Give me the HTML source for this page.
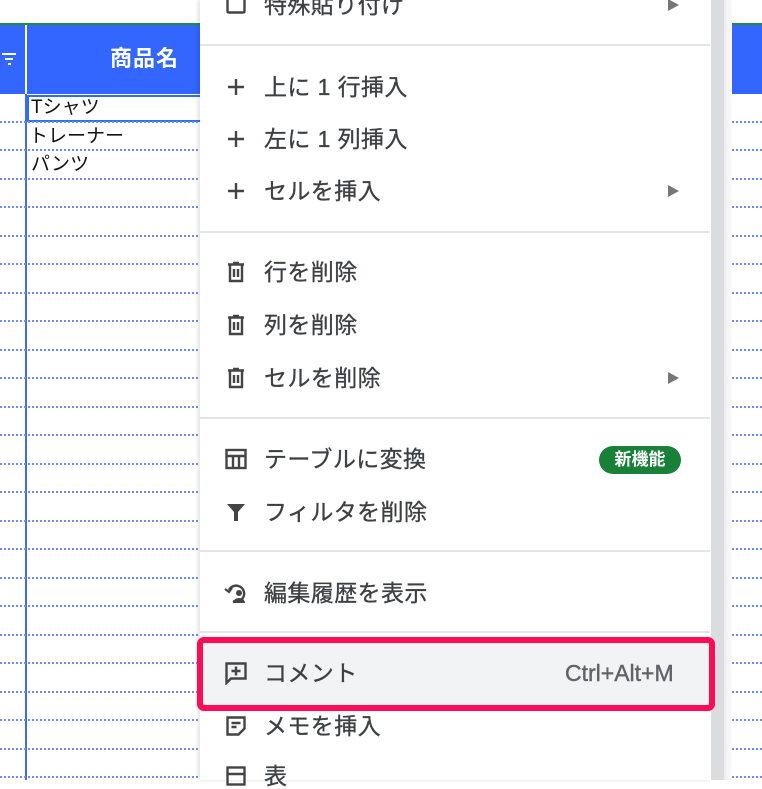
<!DOCTYPE html>
<html><head><meta charset="utf-8"><style>
*{margin:0;padding:0;box-sizing:border-box}
body{width:762px;height:780px;overflow:hidden;background:#fff;position:relative;font-family:"Liberation Sans","Noto Sans CJK JP",sans-serif}
.a{position:absolute}
.hl{position:absolute;left:0;height:2px;background:repeating-linear-gradient(90deg,#6d8df5 0 2px,transparent 2px 4px)}
.t{position:absolute;left:264px;font-size:23px;letter-spacing:0.4px;color:#3c4043;line-height:24px;white-space:nowrap;-webkit-text-stroke:0.3px #3c4043}
.ic{position:absolute;left:224px;width:24px;height:24px}
.arr{position:absolute;left:668px;width:0;height:0;border-left:11px solid #777;border-top:6px solid transparent;border-bottom:6px solid transparent}
.div{position:absolute;left:200px;width:510px;height:2px;background:#e3e5e8}
</style></head><body>
<div class="a" style="left:0;top:23px;width:200px;height:2px;background:#1e8e3e"></div>
<div class="a" style="left:0;top:25px;width:200px;height:69px;background:#3366ff"></div>
<div class="a" style="left:25px;top:25px;width:2px;height:69px;background:#fff"></div>
<div class="a" style="left:25px;top:94px;width:2px;height:686px;background:#3a6df0"></div>
<div class="a" style="left:2px;top:53px;width:14px;height:2px;background:#fff"></div>
<div class="a" style="left:5px;top:58px;width:8px;height:2px;background:#fff"></div>
<div class="a" style="left:8px;top:63px;width:3px;height:2px;background:#fff"></div>
<div class="a" style="left:110px;top:46px;font-size:22px;letter-spacing:1px;font-weight:bold;color:#fff;line-height:26px">商品名</div>
<div class="a" style="left:27px;top:95px;width:175px;height:27px;border:2px solid #2a6ef5;border-right:none"></div>
<div class="a" style="left:31px;top:97px;font-size:19px;color:#111;line-height:22px">Tシャツ</div>
<div class="a" style="left:29px;top:126px;font-size:19px;color:#111;line-height:22px">トレーナー</div>
<div class="a" style="left:31px;top:154px;font-size:19px;color:#111;line-height:22px">パンツ</div>
<div class="a" style="left:0;top:0;width:200px;height:780px">
<div class="hl" style="top:121px;width:200px"></div><div class="hl" style="top:149px;width:200px"></div><div class="hl" style="top:178px;width:200px"></div><div class="hl" style="top:206px;width:200px"></div><div class="hl" style="top:235px;width:200px"></div><div class="hl" style="top:263px;width:200px"></div><div class="hl" style="top:292px;width:200px"></div><div class="hl" style="top:320px;width:200px"></div><div class="hl" style="top:349px;width:200px"></div><div class="hl" style="top:377px;width:200px"></div><div class="hl" style="top:406px;width:200px"></div><div class="hl" style="top:434px;width:200px"></div><div class="hl" style="top:463px;width:200px"></div><div class="hl" style="top:491px;width:200px"></div><div class="hl" style="top:520px;width:200px"></div><div class="hl" style="top:548px;width:200px"></div><div class="hl" style="top:577px;width:200px"></div><div class="hl" style="top:605px;width:200px"></div><div class="hl" style="top:634px;width:200px"></div><div class="hl" style="top:662px;width:200px"></div><div class="hl" style="top:691px;width:200px"></div><div class="hl" style="top:719px;width:200px"></div><div class="hl" style="top:748px;width:200px"></div><div class="hl" style="top:776px;width:200px"></div>
</div>
<div class="a" style="left:732px;top:23px;width:30px;height:2px;background:#1e8e3e"></div>
<div class="a" style="left:732px;top:25px;width:30px;height:69px;background:#3366ff"></div>
<div class="a" style="left:732px;top:0;width:30px;height:780px">
<div class="hl" style="top:121px;width:30px"></div><div class="hl" style="top:149px;width:30px"></div><div class="hl" style="top:178px;width:30px"></div><div class="hl" style="top:206px;width:30px"></div><div class="hl" style="top:235px;width:30px"></div><div class="hl" style="top:263px;width:30px"></div><div class="hl" style="top:292px;width:30px"></div><div class="hl" style="top:320px;width:30px"></div><div class="hl" style="top:349px;width:30px"></div><div class="hl" style="top:377px;width:30px"></div><div class="hl" style="top:406px;width:30px"></div><div class="hl" style="top:434px;width:30px"></div><div class="hl" style="top:463px;width:30px"></div><div class="hl" style="top:491px;width:30px"></div><div class="hl" style="top:520px;width:30px"></div><div class="hl" style="top:548px;width:30px"></div><div class="hl" style="top:577px;width:30px"></div><div class="hl" style="top:605px;width:30px"></div><div class="hl" style="top:634px;width:30px"></div><div class="hl" style="top:662px;width:30px"></div><div class="hl" style="top:691px;width:30px"></div><div class="hl" style="top:719px;width:30px"></div><div class="hl" style="top:748px;width:30px"></div><div class="hl" style="top:776px;width:30px"></div>
</div>
<div class="a" style="left:200px;top:0;width:511px;height:780px;background:#fff;box-shadow:-2px 0 4px rgba(0,0,0,.12)"></div>
<div class="a" style="left:711px;top:0;width:13px;height:780px;background:#dadce0"></div>
<div class="a" style="left:724px;top:0;width:8px;height:780px;background:linear-gradient(90deg,#eee,#fafafa)"></div>

<svg class="ic" style="top:-8px" viewBox="0 0 24 24"><rect x="3.5" y="3.5" width="17" height="17" rx="1" fill="none" stroke="#444" stroke-width="2.4"/></svg>
<div class="t" style="top:-7px">特殊貼り付け</div>
<div class="arr" style="top:-1px"></div>
<div class="div" style="top:44px"></div>

<svg class="ic" style="top:75px" viewBox="0 0 24 24"><path d="M12 4v16M4 12h16" stroke="#444" stroke-width="2.4"/></svg>
<div class="t" style="top:75px">上に 1 行挿入</div>
<svg class="ic" style="top:127px" viewBox="0 0 24 24"><path d="M12 4v16M4 12h16" stroke="#444" stroke-width="2.4"/></svg>
<div class="t" style="top:127px">左に 1 列挿入</div>
<svg class="ic" style="top:179px" viewBox="0 0 24 24"><path d="M12 4v16M4 12h16" stroke="#444" stroke-width="2.4"/></svg>
<div class="t" style="top:179px">セルを挿入</div>
<div class="arr" style="top:185px"></div>
<div class="div" style="top:231px"></div>

<svg class="ic" style="top:260px" viewBox="0 0 24 24"><path d="M4 4.5h16M9 3h6M6 5v16h12V5M10 9v8M14 9v8" fill="none" stroke="#444" stroke-width="2.4"/></svg>
<div class="t" style="top:260px">行を削除</div>
<svg class="ic" style="top:313px" viewBox="0 0 24 24"><path d="M4 4.5h16M9 3h6M6 5v16h12V5M10 9v8M14 9v8" fill="none" stroke="#444" stroke-width="2.4"/></svg>
<div class="t" style="top:313px">列を削除</div>
<svg class="ic" style="top:366px" viewBox="0 0 24 24"><path d="M4 4.5h16M9 3h6M6 5v16h12V5M10 9v8M14 9v8" fill="none" stroke="#444" stroke-width="2.4"/></svg>
<div class="t" style="top:366px">セルを削除</div>
<div class="arr" style="top:372px"></div>
<div class="div" style="top:417px"></div>

<svg class="ic" style="top:447px" viewBox="0 0 24 24"><rect x="2.5" y="3" width="19" height="18" fill="none" stroke="#444" stroke-width="2.4"/><path d="M2.5 9h19M9 9v12M15 9v12" stroke="#444" stroke-width="2.4"/></svg>
<div class="t" style="top:447px">テーブルに変換</div>
<div class="a" style="left:599px;top:446px;width:82px;height:28px;border-radius:14px;background:#188038;color:#fff;font-size:17px;font-weight:bold;line-height:28px;text-align:center">新機能</div>
<svg class="ic" style="top:500px" viewBox="0 0 24 24"><path d="M3 4h18l-7 8v9h-4v-9z" fill="#444"/></svg>
<div class="t" style="top:500px">フィルタを削除</div>
<div class="div" style="top:550px"></div>

<svg class="ic" style="top:581px" viewBox="0 0 24 24"><path d="M5 9a8 8 0 1 1 4 11" fill="none" stroke="#444" stroke-width="2.4"/><path d="M1 8l4 3 3-4" fill="none" stroke="#444" stroke-width="2.2"/><circle cx="15" cy="12" r="3" fill="#444"/><path d="M9 22c0-3 3-5 6-5s6 2 6 5z" fill="#444"/></svg>
<div class="t" style="top:581px">編集履歴を表示</div>
<div class="div" style="top:631px"></div>

<div class="a" style="left:197px;top:637px;width:518px;height:74px;border:6px solid #ff0a54;border-radius:7px;background:#f1f3f4"></div>
<svg class="ic" style="top:661px" viewBox="0 0 24 24"><path d="M2.5 2.5h19v15H7l-4.5 4.5z" fill="none" stroke="#444" stroke-width="2.4"/><path d="M12 5.5v9M7.5 10h9" stroke="#444" stroke-width="2.4"/></svg>
<div class="t" style="top:661px">コメント</div>
<div class="a" style="left:565px;top:661px;font-size:23px;color:#5f6368;line-height:24px;-webkit-text-stroke:0.4px #5f6368">Ctrl+Alt+M</div>

<svg class="ic" style="top:714px" viewBox="0 0 24 24"><path d="M3.5 3.5h17v11l-6 6h-11z" fill="none" stroke="#444" stroke-width="2.4"/><path d="M7.5 9h9M7.5 13h5" stroke="#444" stroke-width="2.4"/></svg>
<div class="t" style="top:714px">メモを挿入</div>
<svg class="ic" style="top:764px" viewBox="0 0 24 24"><rect x="3.5" y="3.5" width="17" height="17" fill="none" stroke="#444" stroke-width="2.4"/><path d="M3.5 10h17" stroke="#444" stroke-width="2.4"/></svg>
<div class="t" style="top:764px">表</div>
</body></html>
